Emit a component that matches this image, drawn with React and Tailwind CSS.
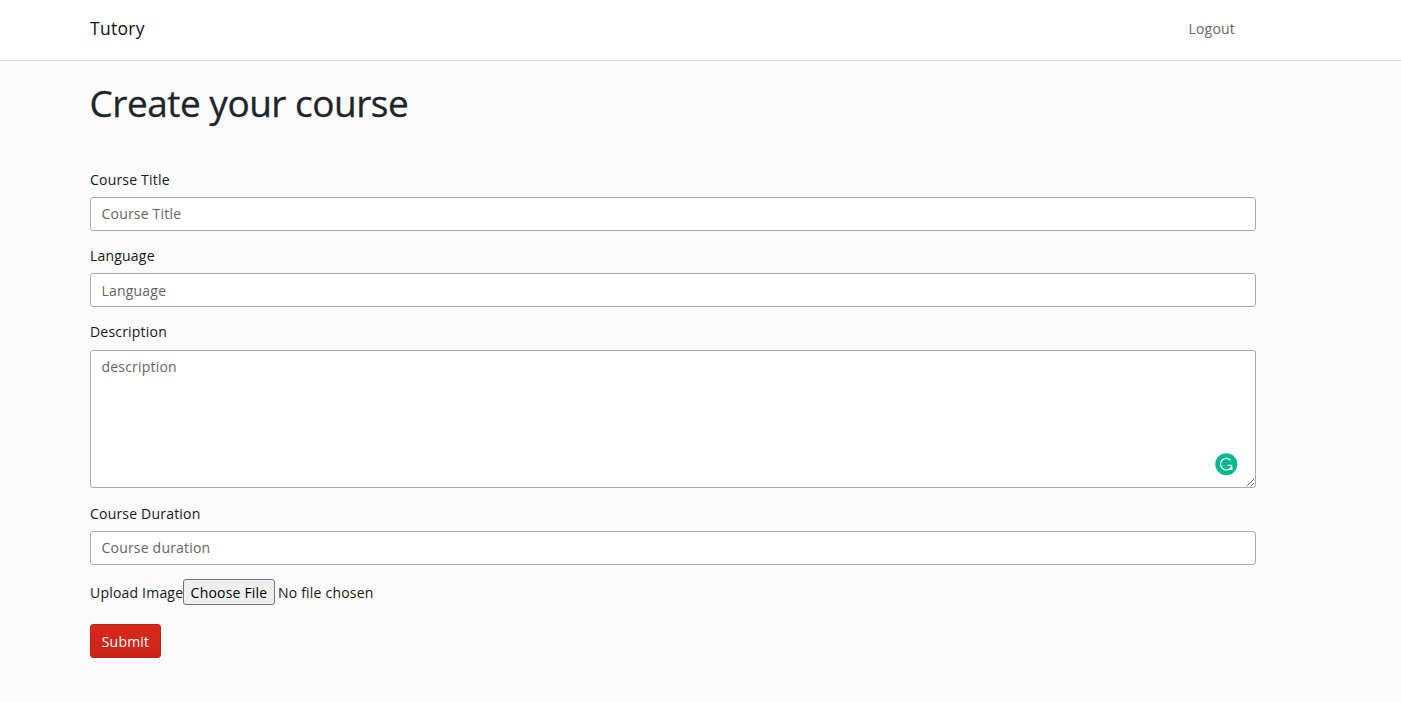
const inputClass =
  'block h-[34px] w-full rounded-[3px] border border-[#aaaaaa] bg-white px-[10.5px] text-[14px] leading-[21px] tracking-[0.2px] text-[#1b1c1d] placeholder:text-[#646464] placeholder:opacity-100';

function Field({ label, placeholder, inputPadding = 'pb-[2px]' }) {
  return (
    <label className="block">
      <span className="mb-[7px] block h-[21px] leading-[21px]">{label}</span>
      <input className={`${inputClass} ${inputPadding}`} placeholder={placeholder} />
    </label>
  );
}

function AssistantBadge() {
  return (
    <svg className="absolute right-[18px] bottom-[12px] size-[23px]" viewBox="0 0 23 23" fill="none">
      <circle cx="11.3" cy="11.3" r="11" fill="#00b88d" />
      <path d="M15.6 7.4A5.7 5.7 0 1 0 14.2 16.1" stroke="white" strokeWidth="1.4" />
      <path d="M12.4 12.2H16.8C16.6 13.7 15.8 15 14.4 16" stroke="white" strokeWidth="1.1" />
      <path d="M17.5 13.2V17.1H13.6Z" fill="white" />
    </svg>
  );
}

export default function App() {
  return (
    <div className="min-h-screen bg-[#fbfbfb] font-['Open_Sans',sans-serif] text-[14px] tracking-[0.2px] text-[#151719]">
      <header className="h-[61px] border-b border-[#d9d9d9] bg-white">
        <nav className="flex h-[56px] items-center justify-between pr-[166px] pl-[90px]">
          <a className="text-[17.5px] tracking-[0.3px] text-[#111111]">Tutory</a>
          <a className="text-[#666666]">Logout</a>
        </nav>
      </header>
      <main className="mr-[145px] ml-[90px] pt-[20px]">
        <h1 className="-mt-px -ml-[0.5px] h-[46px] text-[37px] leading-[46px] tracking-[-0.5px] text-[#212529] [-webkit-text-stroke:0.3px_#212529]">
          Create your course
        </h1>
        <form className="mt-[43px]">
          <Field label="Course Title" placeholder="Course Title" />
          <div className="mt-[14px]">
            <Field label="Language" placeholder="Language" inputPadding="pb-0" />
          </div>
          <label className="mt-[14px] block">
            <span className="mb-[8px] block h-[21px] leading-[21px]">Description</span>
            <span className="relative block h-[138px]">
              <textarea
                className="block h-[138px] w-full resize rounded-[3px] border border-[#aaaaaa] bg-white px-[10.5px] py-[5px] text-[14px] leading-[21px] tracking-[0.2px] placeholder:text-[#646464] placeholder:opacity-100"
                placeholder="description"
              />
              <AssistantBadge />
            </span>
          </label>
          <div className="mt-[15px]">
            <Field label="Course Duration" placeholder="Course duration" />
          </div>
          <div className="mt-[14px] flex h-[26px] items-center">
            <span className="w-[93px] whitespace-nowrap">Upload Image</span>
            <button type="button" className="h-[26px] w-[92px] rounded-[3px] border border-[#767676] bg-[#efefef] tracking-[0.2px] text-black">
              Choose File
            </button>
            <span className="ml-[3px]">No file chosen</span>
          </div>
          <button type="button" className="mt-[19px] block h-[34px] w-[71px] rounded-[3px] border border-[#bd2217] bg-linear-to-b from-[#d9291c] to-[#c82419] tracking-[0.2px] text-white">
            Submit
          </button>
        </form>
      </main>
    </div>
  );
}
